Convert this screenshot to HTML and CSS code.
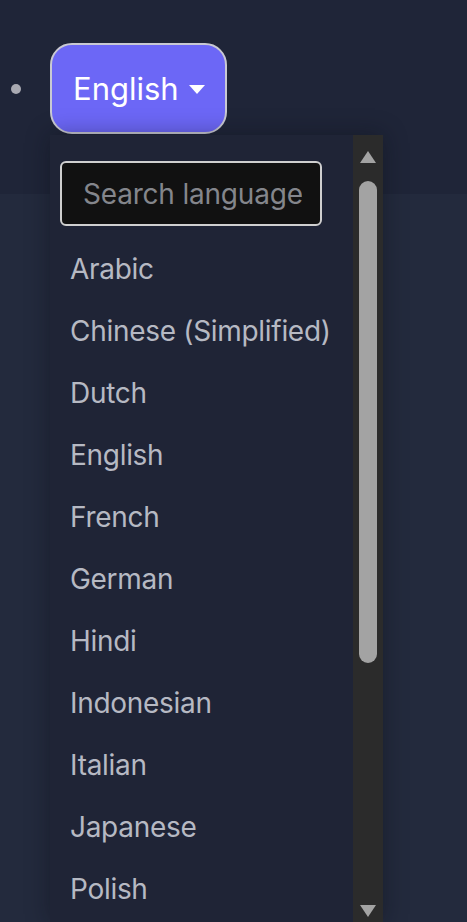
FILE: index.html
```html
<!DOCTYPE html>
<html>

<head>
    <meta charset="utf-8">
    <title>language</title>
    <link rel="stylesheet" href="styles.css">
</head>

<body>
    <div class="topbar">
        <div class="nav-item">
            <span class="dot"></span>
            <button class="lang-btn" type="button">English<span class="caret"></span></button>
        </div>
    </div>

    <div class="lang-menu">
        <div class="lang-list">
            <input class="lang-search" type="text" placeholder="Search language...">
            <div class="lang-item">Arabic</div>
            <div class="lang-item">Chinese (Simplified)</div>
            <div class="lang-item">Dutch</div>
            <div class="lang-item">English</div>
            <div class="lang-item">French</div>
            <div class="lang-item">German</div>
            <div class="lang-item">Hindi</div>
            <div class="lang-item">Indonesian</div>
            <div class="lang-item">Italian</div>
            <div class="lang-item">Japanese</div>
            <div class="lang-item">Polish</div>
        </div>
        <div class="scroll-track">
            <span class="arrow-up"></span>
            <span class="thumb"></span>
            <span class="arrow-down"></span>
        </div>
    </div>
</body>

</html>
```

FILE: styles.css
```css
html, body {
    margin: 0;
    height: 100%;
    overflow: hidden;
}

body {
    background: #232a3d;
    font-family: Inter, "Noto Sans", sans-serif;
    position: relative;
}

.topbar {
    height: 194px;
    background: #1f2538;
    box-sizing: border-box;
    padding-top: 43px;
}

.nav-item {
    display: flex;
    align-items: center;
}

.dot {
    width: 10px;
    height: 10px;
    border-radius: 50%;
    background: #a9aab2;
    margin-left: 11px;
    margin-right: 29px;
}

.lang-btn {
    height: 91px;
    padding: 0 20px 0 21px;
    background: #6c67f6;
    color: #fff;
    border: 2px solid #c9c9d2;
    border-radius: 22px;
    font-family: Inter, "Noto Sans", sans-serif;
    font-size: 31px;
    display: flex;
    align-items: center;
}

.caret {
    display: inline-block;
    margin-left: 10px;
    margin-top: 2px;
    border-left: 8px solid transparent;
    border-right: 8px solid transparent;
    border-top: 9px solid #fff;
}

/* dropdown */
.lang-menu {
    position: absolute;
    left: 50px;
    top: 135px;
    width: 333px;
    height: 787px;
    display: flex;
    background: #1f2436;
    box-shadow: 0 0 22px rgba(10, 12, 20, 0.4);
    overflow: hidden;
}

.lang-list {
    flex: 1;
    padding-top: 26px;
}

.lang-search {
    display: block;
    box-sizing: border-box;
    margin-left: 10px;
    margin-bottom: 12px;
    width: 262px;
    height: 65px;
    padding: 0 18px 0 21px;
    background: #111111;
    border: 2px solid #cfcfcf;
    border-radius: 6px;
    color: #ddd;
    font-family: Inter, "Noto Sans", sans-serif;
    font-size: 28px;
    letter-spacing: -0.2px;
    outline: none;
}

.lang-search::placeholder {
    color: #84868c;
}

.lang-item {
    height: 62px;
    line-height: 62px;
    padding-left: 20px;
    color: #b6b9c3;
    font-size: 28px;
    letter-spacing: -0.3px;
    white-space: nowrap;
}

.scroll-track {
    width: 30px;
    background: #2b2b2b;
    display: flex;
    flex-direction: column;
    align-items: center;
}

.arrow-up {
    margin-top: 16px;
    border-left: 8px solid transparent;
    border-right: 8px solid transparent;
    border-bottom: 12px solid #a3a3a3;
}

.thumb {
    margin-top: 18px;
    width: 18px;
    height: 482px;
    border-radius: 9px;
    background: #a3a3a3;
}

.arrow-down {
    margin-top: auto;
    margin-bottom: 5px;
    border-left: 8px solid transparent;
    border-right: 8px solid transparent;
    border-top: 12px solid #a3a3a3;
}
```
